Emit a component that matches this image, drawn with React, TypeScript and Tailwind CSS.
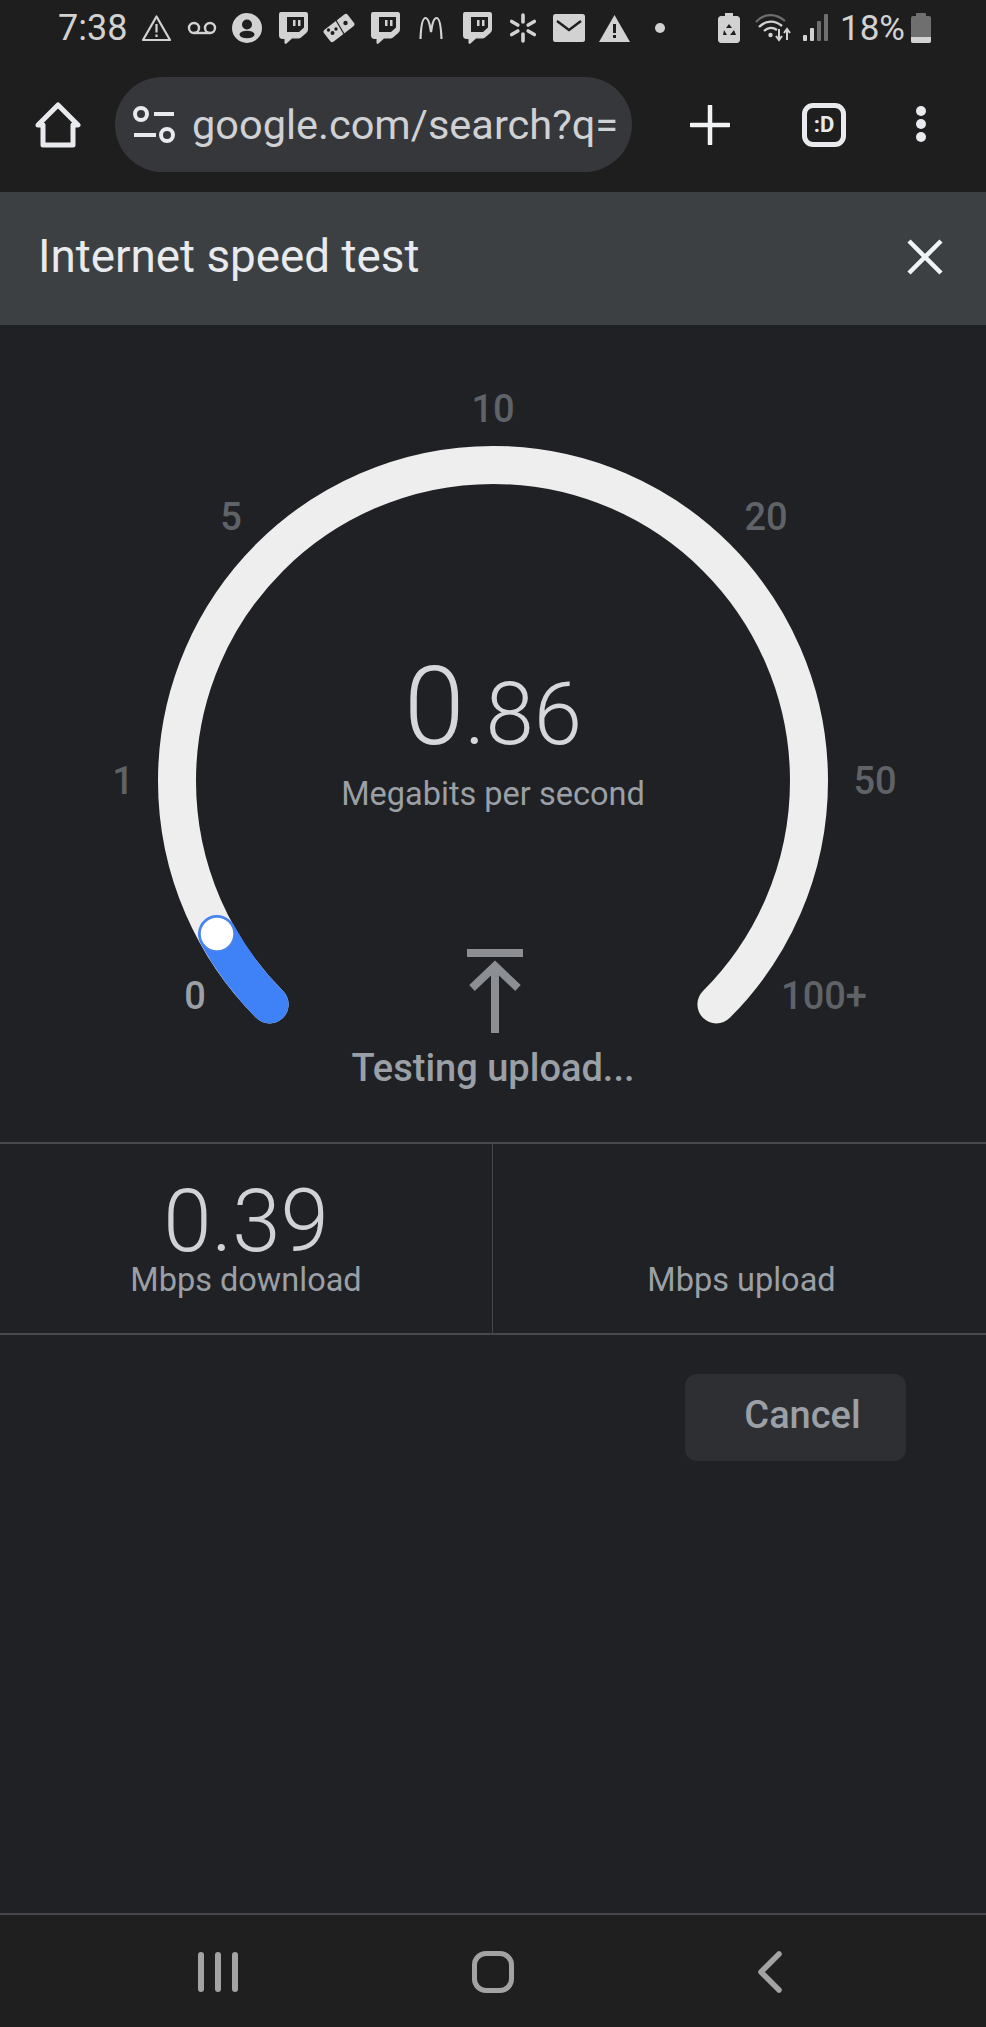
import React from 'react';

const ROBOTO = 'font-[Roboto,"Noto_Sans",sans-serif]';

// Status bar glyph: filled twitch-style speech bubble
const TwitchGlyph = ({ className }: { className: string }) => (
  <svg width="30" height="32" viewBox="0 0 30 32" className={`shrink-0 ${className}`}>
    <path
      d="M3 0H28C29 0 30 1 30 2V17C30 19 29.300 20 28 21.200L23 25.500C22 26.300 21 26.500 20 26.500H14L8.500 31.500C7.500 32.300 6.500 31.800 6.500 30.500V27H4.500C2.500 27 1 25.500 1 23.500V3C1 1 1.500 0 3 0Z"
      fill="#d2d2d2"
    />
    <path d="M9 5H26V15.500L21 20H9Z" fill="#1e1e1f" />
    <path d="M15 8H17.500V14H15ZM20 8H22.500V14H20Z" fill="#d2d2d2" />
  </svg>
);

const WarningOutline = () => (
  <svg width="31" height="28" viewBox="0 0 31 28" className="ml-[16px] shrink-0">
    <path d="M15.500 2.500L29 26H2Z" fill="none" stroke="#d2d2d2" strokeWidth="2.200" strokeLinejoin="round" />
    <path d="M14.400 10H16.600V18.500H14.400ZM14.400 20.500H16.600V23H14.400Z" fill="#d2d2d2" />
  </svg>
);

const StatusBar = () => (
  <div className="flex h-[56px] items-center pl-[58px] text-[#d2d2d2]">
    <span className={`${ROBOTO} w-[67px] whitespace-nowrap text-[36px] leading-none`}>7:38</span>
    <WarningOutline />
    <svg width="30" height="16" viewBox="0 0 30 16" className="ml-[15px] shrink-0">
      <circle cx="7" cy="8" r="5" fill="none" stroke="#d2d2d2" strokeWidth="2.400" />
      <circle cx="23" cy="8" r="5" fill="none" stroke="#d2d2d2" strokeWidth="2.400" />
      <path d="M7 13H23" stroke="#d2d2d2" strokeWidth="2.400" />
    </svg>
    <svg width="30" height="30" viewBox="0 0 30 30" className="ml-[15px] shrink-0">
      <circle cx="15" cy="15" r="15" fill="#d2d2d2" />
      <circle cx="15" cy="11.500" r="5" fill="#1e1e1f" />
      <ellipse cx="15" cy="21.500" rx="7.500" ry="3.800" fill="#1e1e1f" />
    </svg>
    <TwitchGlyph className="ml-[16px]" />
    <svg width="32" height="32" viewBox="0 0 32 32" className="ml-[15px] shrink-0">
      <rect x="1" y="8.500" width="30" height="15" rx="2.500" transform="rotate(-38 16 16)" fill="#d2d2d2" />
      <circle cx="9.500" cy="21" r="2" fill="#1e1e1f" />
      <circle cx="5.500" cy="18" r="1.700" fill="#1e1e1f" />
      <circle cx="13" cy="17" r="1.700" fill="#1e1e1f" />
      <circle cx="22.500" cy="11" r="2.200" fill="#1e1e1f" />
      <path d="M12 6.500L21 22" stroke="#1e1e1f" strokeWidth="1.200" />
    </svg>
    <TwitchGlyph className="ml-[15px]" />
    <svg width="24" height="24" viewBox="0 0 24 24" className="ml-[19px] shrink-0">
      <path d="M1.500 23C2 10 3.500 2 6.500 2C9.500 2 11 9 12 16C13 9 14.500 2 17.500 2C20.500 2 22 10 22.500 23" fill="none" stroke="#d2d2d2" strokeWidth="2.200" />
    </svg>
    <TwitchGlyph className="ml-[19px]" />
    <svg width="28" height="30" viewBox="0 0 28 30" className="ml-[17px] shrink-0">
      <g stroke="#d2d2d2" strokeWidth="3.600" strokeLinecap="round">
        <path d="M14 2V9M14 21V28M2.700 8.500L8.800 12M19.200 18L25.300 21.500M2.700 21.500L8.800 18M19.200 12L25.300 8.500" />
      </g>
    </svg>
    <svg width="32" height="28" viewBox="0 0 32 28" className="ml-[16px] shrink-0">
      <rect width="32" height="28" rx="2.500" fill="#d2d2d2" />
      <path d="M4 7L16 16L28 7" fill="none" stroke="#1e1e1f" strokeWidth="2.400" />
    </svg>
    <svg width="31" height="28" viewBox="0 0 31 28" className="ml-[14px] shrink-0">
      <path d="M15.500 1L31 28H0Z" fill="#d2d2d2" />
      <path d="M14 10H17V19H14ZM14 21H17V24H14Z" fill="#1e1e1f" />
    </svg>
    <span className="ml-[25px] h-[10px] w-[10px] shrink-0 rounded-full bg-[#d2d2d2]" />
    <svg width="22" height="30" viewBox="0 0 22 30" className="ml-[53px] shrink-0">
      <path d="M7 0H15V3H19C20.500 3 22 4.500 22 6V27C22 28.500 20.500 30 19 30H3C1.500 30 0 28.500 0 27V6C0 4.500 1.500 3 3 3H7Z" fill="#d2d2d2" />
      <path d="M11 11L14 15H8ZM6 17L9 22H5ZM16 17L18 22H12Z" fill="#1e1e1f" />
    </svg>
    <svg width="38" height="28" viewBox="0 0 38 28" className="ml-[15px] shrink-0">
      <path d="M1 8C9 -1 21 -1 30 7" fill="none" stroke="#6f6f6f" strokeWidth="2.200" />
      <path d="M4 13C11 6 20 6 27 12" fill="none" stroke="#d2d2d2" strokeWidth="2.400" />
      <path d="M9 17C13 13 18 13 22 16" fill="none" stroke="#d2d2d2" strokeWidth="2.400" />
      <circle cx="15.500" cy="21" r="2.200" fill="#d2d2d2" />
      <path d="M24 15V25M21 22L24 26L27 22M32 26V16M29 19L32 15L35 19" fill="none" stroke="#d2d2d2" strokeWidth="2" />
    </svg>
    <svg width="26" height="28" viewBox="0 0 26 28" className="ml-[10px] shrink-0">
      <rect x="0" y="21" width="4" height="6" rx="1" fill="#d2d2d2" />
      <rect x="7" y="14" width="4" height="13" rx="1" fill="#d2d2d2" />
      <rect x="14" y="7" width="4" height="20" rx="1" fill="#6f6f6f" />
      <rect x="21" y="0" width="4" height="27" rx="1" fill="#6f6f6f" />
    </svg>
    <span className={`${ROBOTO} ml-[11px] w-[65px] whitespace-nowrap text-[35px] leading-none`}>18%</span>
    <div className="ml-[6px] flex h-[30px] w-[20px] shrink-0 flex-col items-center">
      <div className="h-[3px] w-[10px] rounded-t-[1px] bg-[#6f6f6f]" />
      <div className="flex flex-1 w-full flex-col justify-end overflow-hidden rounded-[2px] bg-[#6f6f6f]">
        <div className="h-[6px] bg-[#d2d2d2]" />
      </div>
    </div>
  </div>
);

const Toolbar = () => (
  <div className="relative flex h-[136px] items-start text-[#e8eaed]">
    <svg width="46" height="46" viewBox="0 0 46 46" className="ml-[35px] mt-[46px] shrink-0">
      <path d="M3 23L23 3L43 23H38V43H8V23Z" fill="none" stroke="#e8eaed" strokeWidth="5" strokeLinejoin="round" />
    </svg>
    <div className="ml-[34px] mt-[21px] flex h-[95px] w-[517px] shrink-0 items-center overflow-hidden rounded-full bg-[#35373b] pl-[17px]">
      <svg width="44" height="38" viewBox="0 0 44 38" className="shrink-0">
        <circle cx="9" cy="8" r="6" fill="none" stroke="#e8eaed" strokeWidth="4" />
        <path d="M22 8H42M2 29H24" stroke="#e8eaed" strokeWidth="4" />
        <circle cx="35" cy="29" r="6" fill="none" stroke="#e8eaed" strokeWidth="4" />
      </svg>
      <span className={`${ROBOTO} ml-[16px] whitespace-nowrap text-[41.500px] leading-none text-[#cfd1d4]`}>
        google.com/search?q=
      </span>
    </div>
    <svg width="40" height="40" viewBox="0 0 40 40" className="ml-[58px] mt-[49px] shrink-0">
      <path d="M20 1V39M1 20H39" stroke="#f1f3f4" strokeWidth="4.500" strokeLinecap="round" />
    </svg>
    <div className="ml-[72px] mt-[47px] flex h-[44px] w-[44px] shrink-0 items-center justify-center rounded-[11px] border-[5px] border-[#e8eaed]">
      <span className={`${ROBOTO} text-[22px] font-bold leading-none`}>:D</span>
    </div>
    <div className="ml-[70px] mt-[50px] flex shrink-0 flex-col gap-[3px]">
      <span className="h-[10px] w-[10px] rounded-full bg-[#e8eaed]" />
      <span className="h-[10px] w-[10px] rounded-full bg-[#e8eaed]" />
      <span className="h-[10px] w-[10px] rounded-full bg-[#e8eaed]" />
    </div>
  </div>
);

const GaugeLabel = ({ text, className }: { text: string; className: string }) => (
  <span className={`${ROBOTO} absolute -translate-x-1/2 -translate-y-1/2 text-[38px] font-medium leading-none ${className}`}>
    {text}
  </span>
);

const Gauge = () => (
  <div className="relative h-[817px]">
    <svg width="986" height="817" viewBox="0 0 986 817" className="block">
      <path d="M269.600 679.400A316 316 0 1 1 716.400 679.400" fill="none" stroke="#eeeeee" strokeWidth="38" strokeLinecap="round" />
      <path d="M269.600 679.400A316 316 0 0 1 217 609" fill="none" stroke="#3f82f7" strokeWidth="38" strokeLinecap="round" />
      <circle cx="217" cy="609" r="17" fill="#ffffff" stroke="#4f86e6" strokeWidth="1.500" />
      {/* upload arrow */}
      <path d="M467 628H523" stroke="#8b8e92" strokeWidth="8" />
      <path d="M495 708V642M472 663L495 641L518 663" fill="none" stroke="#8b8e92" strokeWidth="8" />
    </svg>

    <GaugeLabel text="10" className="left-[493px] top-[84px] text-[#5f6368]" />
    <GaugeLabel text="5" className="left-[231px] top-[192px] text-[#5f6368]" />
    <GaugeLabel text="20" className="left-[766px] top-[192px] text-[#5f6368]" />
    <GaugeLabel text="1" className="left-[123px] top-[456px] text-[#5f6368]" />
    <GaugeLabel text="50" className="left-[875px] top-[456px] text-[#5f6368]" />
    <GaugeLabel text="0" className="left-[195px] top-[671px] text-[#9aa0a6]" />
    <GaugeLabel text="100+" className="left-[824px] top-[671px] text-[#5f6368]" />

    {/* live reading in the middle of the dial */}
    <div className={`${ROBOTO} absolute left-0 right-0 top-[328px] flex flex-col items-center`}>
      <div className="flex h-[90px] items-baseline font-light leading-none text-[#d5d7da]">
        <span className="text-[109px]">0</span>
        <span className="text-[87px]">.86</span>
      </div>
      <span className="mt-[35px] text-[32.500px] leading-none text-[#9aa0a6]">Megabits per second</span>
    </div>
    <span className={`${ROBOTO} absolute left-0 right-0 top-[724px] text-center text-[38px] font-medium leading-[38px] text-[#9aa0a6]`}>
      Testing upload...
    </span>
  </div>
);

const Stats = () => (
  <div className={`${ROBOTO} grid h-[193px] grid-cols-2 border-y-2 border-[#46484b]`}>
    <div className="flex flex-col items-center border-r border-[#46484b] pt-[34px]">
      <span className="h-[86px] text-[87px] font-light leading-[86px] text-[#d0d2d5]">0.39</span>
      <span className="text-[32.500px] leading-none text-[#9aa0a6]">Mbps download</span>
    </div>
    <div className="flex flex-col items-center pl-[4px] pt-[120px]">
      <span className="text-[32.500px] leading-none text-[#9aa0a6]">Mbps upload</span>
    </div>
  </div>
);

const NavBar = () => (
  <div className="relative flex h-[114px] border-t-2 border-[#46484b] bg-[#1f1f1f]">
    <div className="ml-[198px] mt-[37px] flex h-[40px] gap-[11px]">
      <span className="w-[6px] rounded-full bg-[#a3a3a3]" />
      <span className="w-[6px] rounded-full bg-[#a3a3a3]" />
      <span className="w-[6px] rounded-full bg-[#a3a3a3]" />
    </div>
    <div className="ml-[234px] mt-[36px] h-[42px] w-[42px] rounded-[14px] border-[5px] border-[#a3a3a3]" />
    <svg width="26" height="42" viewBox="0 0 26 42" className="ml-[243px] mt-[36px]">
      <path d="M22 3L4 21L22 39" fill="none" stroke="#a3a3a3" strokeWidth="5.500" strokeLinecap="round" strokeLinejoin="round" />
    </svg>
  </div>
);

export default function App() {
  return (
    <div className="flex h-[2027px] w-[986px] flex-col overflow-hidden bg-[#202124]">
      <div className="bg-[#1e1e1f]">
        <StatusBar />
        <Toolbar />
      </div>

      <div className="flex h-[133px] items-center justify-between bg-[#3c4043] pb-[3px] pl-[38px] pr-[43px]">
        <span className={`${ROBOTO} text-[45.800px] leading-none text-[#e8eaed]`}>Internet speed test</span>
        <svg width="36" height="36" viewBox="0 0 36 36">
          <path d="M2 2L34 34M34 2L2 34" stroke="#f1f3f4" strokeWidth="4.500" />
        </svg>
      </div>

      <Gauge />
      <Stats />

      <div className="flex justify-end pr-[80px] pt-[39px]">
        <button className={`${ROBOTO} h-[87px] w-[221px] rounded-[12px] bg-[#2e2f32] pb-[4px] pl-[14px] text-[38px] font-medium text-[#9aa0a6]`}>
          Cancel
        </button>
      </div>

      <div className="flex-1" />
      <NavBar />
    </div>
  );
}
